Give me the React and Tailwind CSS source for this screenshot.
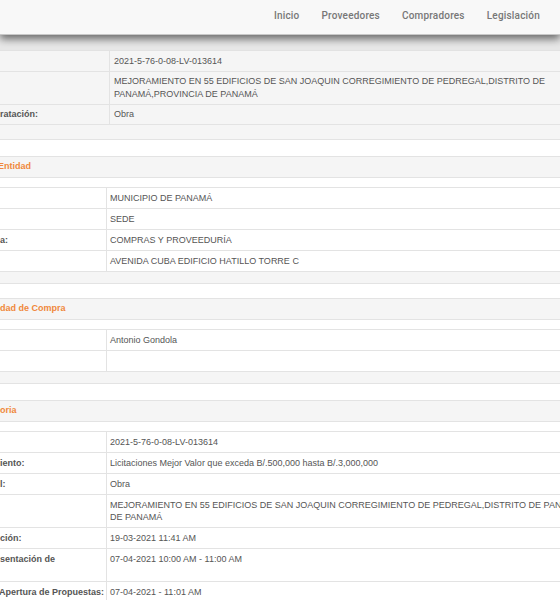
import React from "react";

const MEJ =
  "MEJORAMIENTO EN 55 EDIFICIOS DE SAN JOAQUIN CORREGIMIENTO DE PEDREGAL,DISTRITO DE PANAMÁ,PROVINCIA DE PANAMÁ";

function Row({ label, value, gray, wide, first, labelClass = "" }) {
  const pad = first ? "py-[3.5px] leading-[12.5px]" : "py-[4px] leading-[12px]";
  return (
    <div className={`flex border-t border-[#e3e3e3] ${gray ? "bg-[#f5f5f5]" : "bg-white"}`}>
      <div
        className={`${first ? "w-[110px]" : "w-[107px]"} shrink-0 border-r border-[#e3e3e3] pr-[5px] ${pad} font-bold text-[#555] whitespace-nowrap overflow-hidden ${labelClass}`}
      >
        {label || "\u00a0"}
      </div>
      <div
        className={`${wide ? "w-[540px] shrink-0" : "flex-1"} ${first ? "pl-[4px]" : "pl-[3px]"} pr-[5px] ${pad} text-[#555]`}
      >
        {value || "\u00a0"}
      </div>
    </div>
  );
}

function Tail({ grayH, whiteH }) {
  return (
    <>
      <div className={`${grayH} border-t border-[#e3e3e3] bg-[#f5f5f5]`} />
      <div className={`${whiteH} border-t border-[#e3e3e3] bg-white`} />
    </>
  );
}

function Header({ title, className = "" }) {
  return (
    <>
      <div className="h-[22px] border-y border-[#e3e3e3] bg-[#f5f5f5] flex items-center">
        <span className={`font-bold text-[#f0883c] whitespace-nowrap ${className}`}>{title}</span>
      </div>
      <div className="h-[9px] bg-white" />
    </>
  );
}

export default function App() {
  return (
    <div className="w-[560px] h-[600px] overflow-hidden bg-white font-['Liberation_Sans',Arial,sans-serif] text-[9px]">
      <div className="relative z-10 h-[35px] bg-[#f8f8f8] border-b border-[#c8c8c8] shadow-[0_4px_8px_rgba(0,0,0,0.55)] flex items-center justify-end gap-[22px] pr-[20px] pb-[4px] font-['Roboto',Arial,sans-serif] text-[10px] font-medium tracking-[0.2px] text-[#777]">
        <span>Inicio</span>
        <span>Proveedores</span>
        <span>Compradores</span>
        <span>Legislación</span>
      </div>
      <div className="h-[15px] bg-[#e8e8e8]" />

      <Row first gray label="" value="2021-5-76-0-08-LV-013614" />
      <Row first gray label="" value={MEJ} />
      <Row first gray label="ratación:" value="Obra" />
      <Tail grayH="h-[15px]" whiteH="h-[17px]" />

      <Header title="Entidad" className="-ml-[2px]" />
      <Row label="" value="MUNICIPIO DE PANAMÁ" />
      <Row label="" value="SEDE" />
      <Row label="a:" value="COMPRAS Y PROVEEDURÍA" />
      <Row label="" value="AVENIDA CUBA EDIFICIO HATILLO TORRE C" />
      <Tail grayH="h-[12px]" whiteH="h-[15px]" />

      <Header title="dad de Compra" />
      <Row label="" value="Antonio Gondola" />
      <Row label="" value="" />
      <Tail grayH="h-[12px]" whiteH="h-[17px]" />

      <Header title="oria" />
      <Row wide label="" value="2021-5-76-0-08-LV-013614" />
      <Row
        wide
        label="iento:"
        value="Licitaciones Mejor Valor que exceda B/.500,000 hasta B/.3,000,000"
      />
      <Row wide label="l:" value="Obra" />
      <Row wide label="" value={MEJ} />
      <Row wide label="ción:" value="19-03-2021 11:41 AM" />
      <Row
        wide
        label={
          <>
            sentación de
            <br />
            {"\u00a0"}
          </>
        }
        value="07-04-2021 10:00 AM - 11:00 AM"
      />
      <Row wide label="Apertura de Propuestas:" labelClass="-indent-[1px]" value="07-04-2021 - 11:01 AM" />
    </div>
  );
}
